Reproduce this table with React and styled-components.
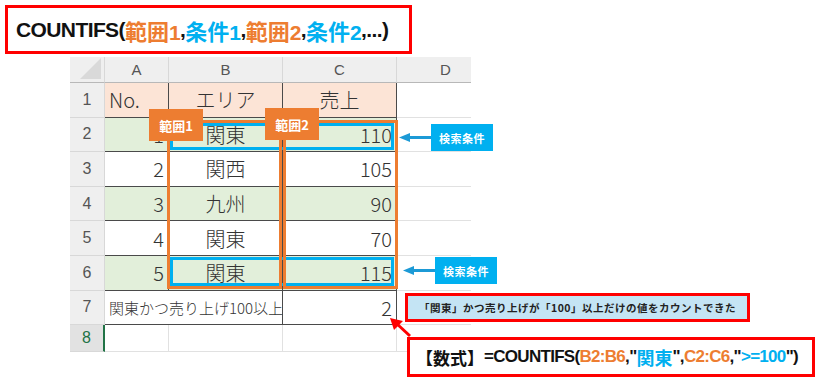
import React from "react";
import styled, { createGlobalStyle } from "styled-components";

const GlobalStyle = createGlobalStyle`
  body {
    margin: 0;
    background: #fff;
    font-family: "Liberation Sans", "Noto Sans CJK JP", sans-serif;
  }
`;

const ORANGE = "#ed7d31";
const BLUE = "#00b0f0";
const RED = "#ff0000";

const Page = styled.div`
  width: 819px;
  height: 383px;
  padding: 5px 0 0 5px;
  box-sizing: border-box;
  overflow: hidden;
`;

const TitleBox = styled.div`
  width: 407px;
  height: 49px;
  box-sizing: border-box;
  border: 3px solid ${RED};
  display: flex;
  align-items: center;
  padding-left: 8px;
  font-size: 21px;
  font-weight: 700;
  letter-spacing: -0.6px;
  color: #111;
  white-space: nowrap;
`;

const Hl = styled.span`
  color: ${(p) => p.$color};
`;

const Kanji = styled.span`
  font-family: "Noto Sans CJK JP", sans-serif;
  font-size: ${(p) => p.$size || 22}px;
  letter-spacing: 0;
`;

const Stage = styled.div`
  position: relative;
  margin: 3px 0 0 65px;
  width: 745px;
  height: 321px;
`;

const Sheet = styled.div`
  width: 401px;
  overflow: hidden;
  display: grid;
  grid-template-columns: 35px 64px 114px 114px 98px;
  grid-template-rows: 26px repeat(7, 34.6px) 27px;
  font-family: "Noto Sans CJK JP", sans-serif;
  color: #333;
`;

const ColHead = styled.div`
  background: #efefef;
  border-right: 1px solid #d8d8d8;
  border-bottom: 1px solid #b8b8b8;
  box-sizing: border-box;
  display: flex;
  align-items: center;
  justify-content: center;
  font-family: "Liberation Sans", sans-serif;
  font-size: 15px;
  color: #555;
`;

const Corner = styled(ColHead)`
  align-items: flex-end;
  justify-content: flex-end;
  padding: 0 3px 3px 0;
`;

const Triangle = styled.div`
  width: 21px;
  height: 21px;
  background: #d9d9d9;
  clip-path: polygon(100% 0, 100% 100%, 0 100%);
`;

const RowHead = styled.div`
  background: ${(p) => (p.$active ? "#e2e2e2" : "#efefef")};
  border-bottom: 1px solid #d8d8d8;
  border-right: ${(p) => (p.$active ? `2px solid #217346` : "1px solid #d8d8d8")};
  box-sizing: border-box;
  display: flex;
  align-items: center;
  justify-content: center;
  font-family: "Liberation Sans", sans-serif;
  font-size: 16px;
  color: ${(p) => (p.$active ? "#217346" : "#555")};
`;

const Cell = styled.div`
  grid-column: span ${(p) => p.$span || 1};
  background: ${(p) => p.$bg || "#fff"};
  border-right: 1px solid ${(p) => (p.$table ? "#4a4a4a" : "#e1e1e1")};
  border-bottom: 1px solid ${(p) => (p.$table ? "#4a4a4a" : "#e1e1e1")};
  box-sizing: border-box;
  display: flex;
  align-items: center;
  justify-content: ${(p) =>
    p.$align === "right" ? "flex-end" : p.$align === "left" ? "flex-start" : "center"};
  padding: 0 4px;
  font-size: ${(p) => p.$size || 20}px;
  font-weight: 300;
  white-space: nowrap;
`;

const RangeBox = styled.div`
  position: absolute;
  box-sizing: border-box;
  border: 3px solid ${ORANGE};
  left: ${(p) => p.$x}px;
  top: ${(p) => p.$y}px;
  width: ${(p) => p.$w}px;
  height: ${(p) => p.$h}px;
  z-index: 2;
`;

const CondBox = styled(RangeBox)`
  border-color: ${BLUE};
  z-index: 1;
`;

const Tag = styled.div`
  position: absolute;
  left: ${(p) => p.$x}px;
  top: ${(p) => p.$y}px;
  width: ${(p) => p.$w}px;
  height: ${(p) => p.$h}px;
  background: ${(p) => p.$bg};
  color: #fff;
  font-family: "Noto Sans CJK JP", sans-serif;
  font-weight: 700;
  font-size: ${(p) => p.$size}px;
  letter-spacing: ${(p) => p.$ls || 0}px;
  display: flex;
  align-items: center;
  justify-content: center;
  z-index: 3;
`;

const Note = styled.div`
  position: absolute;
  left: 335px;
  top: 236px;
  width: 345px;
  height: 29px;
  box-sizing: border-box;
  border: 3px solid ${RED};
  background: #c4e4f4;
  display: flex;
  align-items: center;
  justify-content: center;
  font-family: "Noto Sans CJK JP", sans-serif;
  font-weight: 700;
  font-size: 10.5px;
  letter-spacing: 0.5px;
  color: #222;
  z-index: 3;
`;

const Formula = styled.div`
  position: absolute;
  left: 337px;
  top: 280px;
  width: 408px;
  height: 40px;
  box-sizing: border-box;
  border: 3px solid ${RED};
  background: #fff;
  display: flex;
  align-items: center;
  padding-left: 6px;
  font-size: 17px;
  font-weight: 700;
  letter-spacing: -0.7px;
  color: #111;
  white-space: nowrap;
  z-index: 3;
`;

const Arrows = styled.svg`
  position: absolute;
  left: 0;
  top: 0;
  width: 745px;
  height: 321px;
  pointer-events: none;
  z-index: 4;
`;

const cols = ["A", "B", "C", "D"];

const rows = [
  { bg: "#fce4d6", cells: [["No.", "left"], ["エリア", "center"], ["売上", "center"]] },
  { bg: "#e2efda", cells: [["1", "right"], ["関東", "center"], ["110", "right"]] },
  { bg: "#fff", cells: [["2", "right"], ["関西", "center"], ["105", "right"]] },
  { bg: "#e2efda", cells: [["3", "right"], ["九州", "center"], ["90", "right"]] },
  { bg: "#fff", cells: [["4", "right"], ["関東", "center"], ["70", "right"]] },
  { bg: "#e2efda", cells: [["5", "right"], ["関東", "center"], ["115", "right"]] },
];

function LeftArrow({ x1, x2, y, color }) {
  return (
    <g>
      <line x1={x1 + 9} y1={y} x2={x2} y2={y} stroke={color} strokeWidth="3" />
      <polygon points={`${x1},${y} ${x1 + 11},${y - 4.5} ${x1 + 11},${y + 4.5}`} fill={color} />
    </g>
  );
}

export default function App() {
  return (
    <Page>
      <GlobalStyle />
      <TitleBox>
        COUNTIFS(
        <Hl $color={ORANGE}><Kanji>範囲</Kanji>1</Hl>,
        <Hl $color={BLUE}><Kanji>条件</Kanji>1</Hl>,
        <Hl $color={ORANGE}><Kanji>範囲</Kanji>2</Hl>,
        <Hl $color={BLUE}><Kanji>条件</Kanji>2</Hl>,...)
      </TitleBox>

      <Stage>
        <Sheet>
          <Corner><Triangle /></Corner>
          {cols.map((c) => (
            <ColHead key={c}>{c}</ColHead>
          ))}

          {rows.map((r, i) => (
            <React.Fragment key={i}>
              <RowHead>{i + 1}</RowHead>
              {r.cells.map(([text, align], j) => (
                <Cell key={j} $table $bg={r.bg} $align={align}>
                  {text}
                </Cell>
              ))}
              <Cell />
            </React.Fragment>
          ))}

          <RowHead>7</RowHead>
          <Cell $table $span={2} $align="left" $size={15}>
            関東かつ売り上げ100以上
          </Cell>
          <Cell $table $align="right">2</Cell>
          <Cell />

          <RowHead $active>8</RowHead>
          <Cell />
          <Cell />
          <Cell />
          <Cell />
        </Sheet>

        <CondBox $x={100} $y={66} $w={224} $h={27} />
        <CondBox $x={100} $y={200} $w={224} $h={29} />
        <RangeBox $x={97} $y={63} $w={115} $h={169} />
        <RangeBox $x={213} $y={63} $w={115} $h={169} />

        <Tag $x={79} $y={52} $w={54} $h={32} $bg={ORANGE} $size={13}>範囲1</Tag>
        <Tag $x={195} $y={51} $w={54} $h={32} $bg={ORANGE} $size={13}>範囲2</Tag>
        <Tag $x={361} $y={67} $w={62} $h={27} $bg={BLUE} $size={11} $ls={0.5}>検索条件</Tag>
        <Tag $x={365} $y={200} $w={62} $h={27} $bg={BLUE} $size={11} $ls={0.5}>検索条件</Tag>

        <Note>「関東」かつ売り上げが「100」以上だけの値をカウントできた</Note>

        <Formula>
          <Kanji $size={17}>【数式】</Kanji>=COUNTIFS(
          <Hl $color={ORANGE}>B2:B6</Hl>,"
          <Hl $color={BLUE}><Kanji $size={18}>関東</Kanji></Hl>",
          <Hl $color={ORANGE}>C2:C6</Hl>,"
          <Hl $color={BLUE}>&gt;=100</Hl>")
        </Formula>

        <Arrows viewBox="0 0 745 321">
          <LeftArrow x1={329} x2={361} y={80.5} color="#1c9ad6" />
          <LeftArrow x1={333} x2={365} y={213.5} color="#1c9ad6" />
          <line x1="340" y1="279" x2="326" y2="266" stroke={RED} strokeWidth="3" />
          <polygon points="320,261 333,264 324,273" fill={RED} />
        </Arrows>
      </Stage>
    </Page>
  );
}
